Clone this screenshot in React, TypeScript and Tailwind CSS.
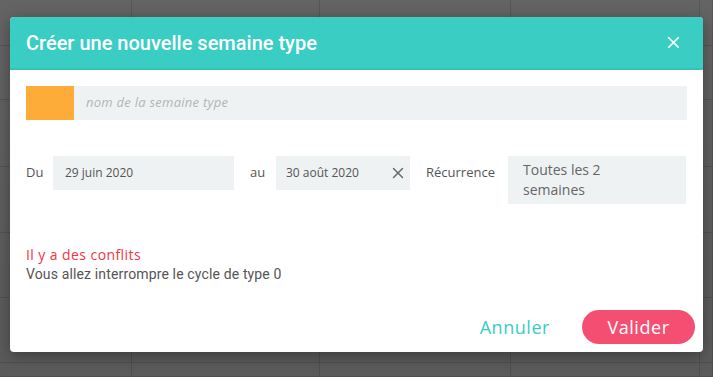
import { X } from "lucide-react";

const poppins = { fontFamily: '"Open Sans", "Noto Sans", sans-serif' };

function BackgroundGrid() {
  const cols = [132, 188, 191, 189, 13];
  const rows = [46, 54, 67, 66, 65, 65, 14];
  return (
    <div className="absolute inset-0 flex flex-col bg-[#646464]">
      {rows.map((h, r) => (
        <div key={r} className="flex border-b border-[#575757]" style={{ height: h }}>
          {cols.map((w, c) => (
            <div key={c} className="h-full border-r border-[#575757]" style={{ width: w }} />
          ))}
        </div>
      ))}
      <div className="absolute inset-0 bg-gradient-to-t from-[#00000018] to-transparent" />
    </div>
  );
}

export default function App() {
  return (
    <div className="relative w-[713px] h-[377px] overflow-hidden">
      <BackgroundGrid />

      {/* Modal */}
      <div className="absolute left-[10px] top-[17px] w-[693px] h-[335px] bg-white rounded-[4px] overflow-hidden shadow-[0_4px_16px_rgba(0,0,0,0.35)] flex flex-col">
        <div className="h-[53px] bg-[#3acdc4] border-b-2 border-[#35c2b9] flex items-center justify-between pl-4 pr-5 shrink-0">
          <h1 className="text-white text-[20px] font-medium" style={{ fontFamily: "Roboto, sans-serif" }}>
            Créer une nouvelle semaine type
          </h1>
          <X className="w-[19px] h-[19px] text-white" strokeWidth={2.2} />
        </div>

        <div className="flex-1 flex flex-col px-4 pt-4" style={poppins}>
          {/* Name */}
          <div className="flex h-[34px]">
            <div className="w-12 bg-[#fdac3a]" />
            <div className="flex-1 bg-[#eff2f3] flex items-center pl-3 text-[13px] tracking-[0.02em] italic text-[#b3b5b7]">
              nom de la semaine type
            </div>
          </div>

          {/* Dates */}
          <div className="flex items-start mt-9 text-[13px] text-[#555]">
            <span className="w-[27px] h-[34px] flex items-center">Du</span>
            <div className="w-[181px] h-[34px] bg-[#eff2f3] flex items-center pl-3 text-[12px] text-[#555]">29 juin 2020</div>
            <span className="w-[42px] h-[34px] flex items-center pl-4">au</span>
            <div className="w-[134px] h-[34px] bg-[#eff2f3] flex items-center justify-between pl-[10px] pr-[3px] text-[12px] text-[#555]">
              <span>30 août 2020</span>
              <X className="w-[18px] h-[18px] text-[#666]" strokeWidth={1.8} />
            </div>
            <span className="w-[98px] h-[34px] flex items-center pl-4">Récurrence</span>
            <div className="w-[178px] h-[48px] bg-[#eff2f3] pl-[15px] pr-8 pt-[4px] text-[14px] leading-[20px] text-[#666]">
              Toutes les 2 semaines
            </div>
          </div>

          {/* Conflicts */}
          <div className="mt-[41px] text-[14px] tracking-[0.03em] text-[#f4343f] leading-[19px]">Il y a des conflits</div>
          <div className="mt-[1px] text-[14px] tracking-[0.01em] text-[#555] leading-[19px]" style={{ fontFamily: "Roboto, sans-serif" }}>
            Vous allez interrompre le cycle de type 0
          </div>

          {/* Actions */}
          <div className="flex items-center justify-end mt-[26px] -mr-2">
            <button className="text-[18px] tracking-[0.03em] text-[#3acdc4] mr-8">Annuler</button>
            <button className="w-[113px] h-[34px] rounded-full bg-[#f44e72] text-white text-[18px] tracking-[0.03em]">Valider</button>
          </div>
        </div>
      </div>
    </div>
  );
}
